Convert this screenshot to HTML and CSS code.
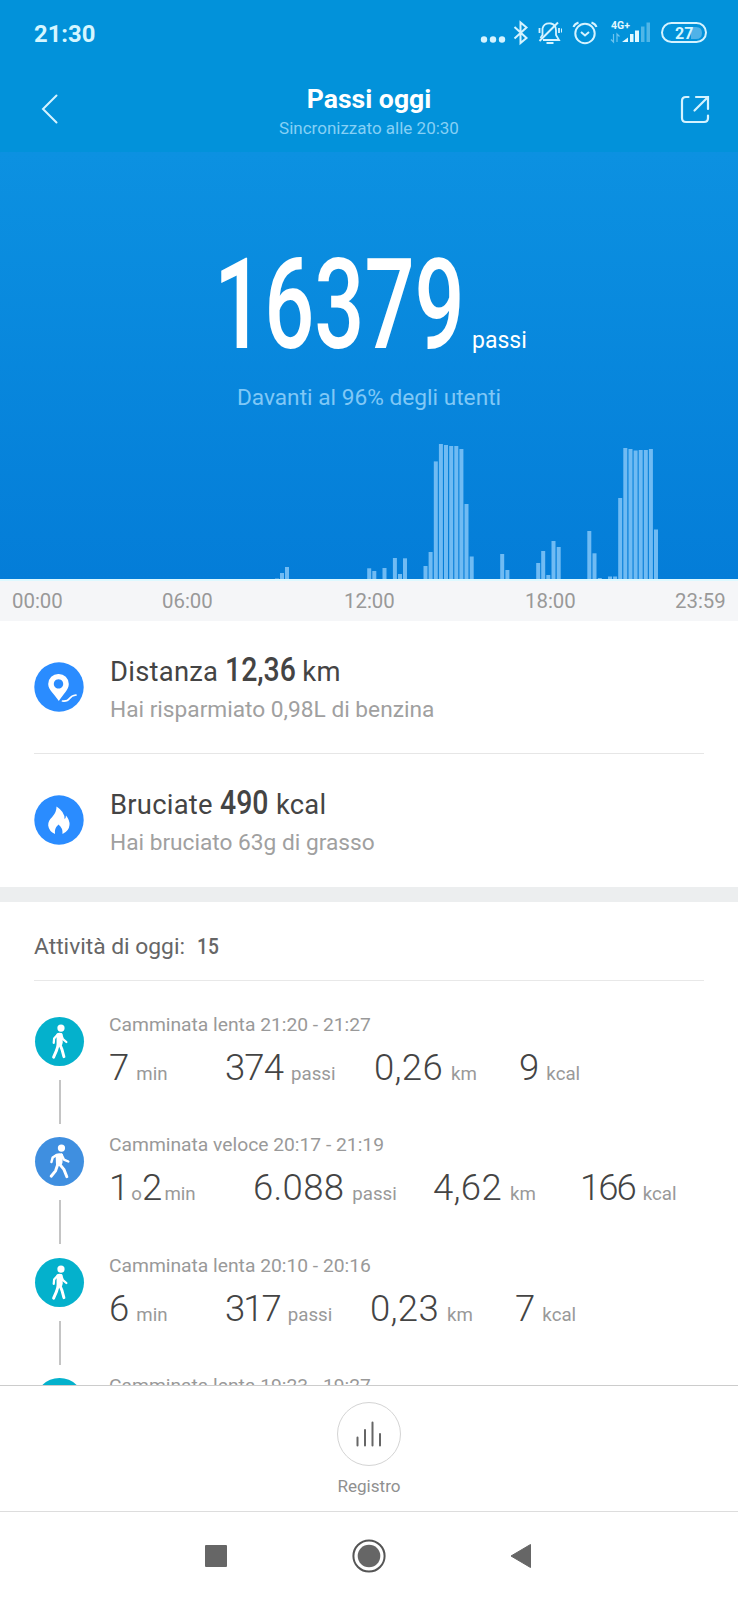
FILE: index.html
```html
<!DOCTYPE html>
<html lang="it">
<head>
    <meta charset="UTF-8">
    <meta name="viewport" content="width=device-width, initial-scale=1.0">
    <title>Passi oggi</title>
    <link rel="stylesheet" href="styles.css">
</head>
<body>

<!-- shared icons -->
<svg class="defs" width="0" height="0">
    <symbol id="walk-slow" viewBox="0 0 50 50">
        <circle cx="26.500" cy="11.300" r="3.700" fill="#fff"/>
        <path d="M26.500 17.500l2 5 3.500 3M23 18l-3.500 4-.4 4.500" fill="none" stroke="#fff" stroke-width="2.300" stroke-linecap="round" stroke-linejoin="round"/>
        <path d="M22 17q3-2 6 0l.3 9-.8 3h-5.500z" fill="#fff"/>
        <path d="M25 27l2.500 6 2 7.500M23.500 29l-1.500 5-3 7" fill="none" stroke="#fff" stroke-width="3" stroke-linecap="round" stroke-linejoin="round"/>
    </symbol>
    <symbol id="walk-fast" viewBox="0 0 50 50">
        <circle cx="27" cy="11.300" r="3.700" fill="#fff"/>
        <path d="M27 18l2.500 5 4.500 2M22 18.500l-4 2.500-1.200 4.500" fill="none" stroke="#fff" stroke-width="2.500" stroke-linecap="round" stroke-linejoin="round"/>
        <path d="M21 17.500q4-2 7.500 0l-.5 9-1.500 3h-5z" fill="#fff"/>
        <path d="M24.500 27l5 6 3 7.500M23 28.500l-2 6-4.500 5.500" fill="none" stroke="#fff" stroke-width="3" stroke-linecap="round" stroke-linejoin="round"/>
    </symbol>
</svg>

<div class="phone">

    <div class="top">
        <div class="status">
            <span class="clock">21:30</span>
            <svg class="status-icons" width="236" height="30" viewBox="474 18 236 30" fill="none" stroke="#d5f3ff" stroke-width="2">
                <g fill="#d5f3ff" stroke="none">
                    <circle cx="484" cy="39.500" r="3.200"/>
                    <circle cx="493" cy="39.500" r="3.200"/>
                    <circle cx="502" cy="39.500" r="3.200"/>
                </g>
                <path d="M514.500 27l12 11-6 5V22.500l6 5-12 11"/>
                <path d="M543 40h16l-3-5v-4.500q0-6-5-7-7-1-8.500 5v6.500l-2 3M546.500 43h7" stroke-width="1.800"/>
                <path d="M539.500 41L558 22.500"/>
                <path d="M539.500 28v5M559 28v5" stroke-width="1.800"/>
                <path d="M561.500 28.500v4" stroke-width="1"/>
                <circle cx="585" cy="33.500" r="9.700"/>
                <path d="M581 32l4 3.500 4-3.500M573.500 27q1-3 5-4.500M596.500 27q-1-3-5-4.500"/>
                <g stroke="#6ec3ee" stroke-width="1.200">
                    <path d="M613.500 34v8l-2.500-2.500M617 42v-8l2.500 2.500"/>
                </g>
                <g stroke="none" fill="#e3f8ff">
                    <path d="M622 42l6-4.500V42z"/>
                    <rect x="630" y="34" width="3.500" height="8"/>
                    <rect x="635" y="30.500" width="4" height="11.500"/>
                    <rect x="641" y="26.500" width="3.500" height="15.500" opacity=".35"/>
                    <rect x="646.500" y="22.500" width="3.500" height="19.500" opacity=".35"/>
                    <text x="611" y="29" class="net">4G+</text>
                </g>
                <path d="M691 27h5q6 0 6 6t-6 6h-5z" fill="#4fb2e8" stroke="none"/>
                <rect x="662" y="23" width="44" height="19" rx="9.500"/>
                <text x="675" y="38.700" class="battery">27</text>
            </svg>
        </div>
        <div class="titlebar">
            <svg class="back" width="20" height="32" viewBox="0 0 20 32">
                <path d="M16.500 2.500L3 16l13.500 13.500" fill="none" stroke="#d5f3ff" stroke-width="2" stroke-linecap="round"/>
            </svg>
            <div class="titles">
                <h1>Passi oggi</h1>
                <p>Sincronizzato alle 20:30</p>
            </div>
            <svg class="share" width="30" height="30" viewBox="0 0 30 30" fill="none" stroke="#d5f3ff" stroke-width="2.200" stroke-linecap="round">
                <path d="M8.500 2H6Q2 2 2 6v17q0 4 4 4h18q4 0 4-4v-2.500"/>
                <path d="M16 2h12v12M28 2L14.500 15.500"/>
            </svg>
        </div>
    </div>

    <div class="hero">
        <div class="total">
            <span class="total-num">16379</span>
            <span class="total-unit">passi</span>
        </div>
        <p class="rank">Davanti al 96% degli utenti</p>
        <svg class="chart" width="738" height="140" viewBox="0 0 738 140" fill="#70bbf3">
            <rect x="275" y="139.500" width="4" height=".5"/>
            <rect x="280" y="134" width="4" height="6"/>
            <rect x="285" y="128" width="4" height="12"/>
            <rect x="367.200" y="129.300" width="4" height="10.700"/>
            <rect x="372.300" y="132" width="4" height="8"/>
            <rect x="382.500" y="129" width="4" height="11"/>
            <rect x="392.900" y="119" width="4" height="21"/>
            <rect x="398" y="135" width="4" height="5"/>
            <rect x="403" y="119.300" width="4" height="20.700"/>
            <rect x="423.500" y="127" width="4" height="13"/>
            <rect x="428.600" y="113" width="4" height="27"/>
            <rect x="433.800" y="22.400" width="4" height="117.600"/>
            <rect x="438.900" y="5" width="4" height="135"/>
            <rect x="444" y="6" width="4" height="134"/>
            <rect x="449.200" y="7" width="4" height="133"/>
            <rect x="454.300" y="7" width="4" height="133"/>
            <rect x="459.400" y="10" width="4" height="130"/>
            <rect x="464.500" y="65" width="4" height="75"/>
            <rect x="469.700" y="117.500" width="4" height="22.500"/>
            <rect x="500.200" y="115" width="4" height="25"/>
            <rect x="505.400" y="131" width="4" height="9"/>
            <rect x="536.200" y="124" width="4" height="16"/>
            <rect x="541.200" y="112" width="4" height="28"/>
            <rect x="546.300" y="136" width="4" height="4"/>
            <rect x="551.500" y="102" width="4" height="38"/>
            <rect x="556.700" y="108" width="4" height="32"/>
            <rect x="587.300" y="92" width="4" height="48"/>
            <rect x="592.500" y="114.300" width="4" height="25.700"/>
            <rect x="597.800" y="139" width="4" height="1"/>
            <rect x="608" y="137.500" width="4" height="2.500"/>
            <rect x="613.100" y="137.500" width="4" height="2.500"/>
            <rect x="618.200" y="59" width="4" height="81"/>
            <rect x="623.300" y="9" width="4" height="131"/>
            <rect x="628.500" y="10" width="4" height="130"/>
            <rect x="633.600" y="11.500" width="4" height="128.500"/>
            <rect x="638.700" y="11" width="4" height="129"/>
            <rect x="643.800" y="11" width="4" height="129"/>
            <rect x="648.900" y="10" width="4" height="130"/>
            <rect x="654" y="90.500" width="4" height="49.500"/>
        </svg>
    </div>

    <div class="axis">
        <span>00:00</span><span>06:00</span><span>12:00</span><span>18:00</span><span>23:59</span>
    </div>

    <div class="summary">
        <div class="card">
            <svg width="50" height="50" viewBox="0 0 50 50">
                <circle cx="25" cy="25" r="24.700" fill="#2a8cff"/>
                <path fill-rule="evenodd" d="M24.500 12a10 10 0 0 1 10.300 10c0 6-6 10.500-10 17-4-6.500-10.600-11-10.600-17A10 10 0 0 1 24.500 12zm0 5.200a4.700 4.700 0 1 0 .01 0z" fill="#fff"/>
                <path d="M28.500 39q5 .5 7-2.500t6.500-3.500" fill="none" stroke="#fff" stroke-width="1.700" stroke-linecap="round"/>
            </svg>
            <div class="card-text">
                <p class="card-title">Distanza <b class="dist"><i>12,36</i></b> km</p>
                <p class="card-sub">Hai risparmiato 0,98L di benzina</p>
            </div>
        </div>
        <div class="card">
            <svg width="50" height="50" viewBox="0 0 50 50">
                <circle cx="25" cy="25" r="24.700" fill="#2a8cff"/>
                <path d="M22.500 11.500q8.500 5.500 8 12.500 1.500-1 1.500-3.500 4 5 3.500 9.500-.5 6-7 9 .5-6-4-9.500-4.500 4-3.500 9.500-6-2.500-6.800-8.500-.4-4.500 4-8.500 4.500-5 4.300-10.500z" fill="#fff"/>
            </svg>
            <div class="card-text">
                <p class="card-title">Bruciate <b class="kcal"><i>490</i></b> kcal</p>
                <p class="card-sub">Hai bruciato 63g di grasso</p>
            </div>
        </div>
    </div>

    <div class="activities">
        <h2>Attività di oggi: <b>15</b></h2>

        <div class="activity">
            <div class="track">
                <svg class="dot slow"><use href="#walk-slow"/></svg>
            </div>
            <div class="info">
                <p class="when">Camminata lenta 21:20 - 21:27</p>
                <div class="metrics m1">
                    <span><em>7</em>min</span>
                    <span><em>374</em>passi</span>
                    <span><em class="dec">0,26</em>km</span>
                    <span><em>9</em>kcal</span>
                </div>
            </div>
        </div>

        <div class="activity">
            <div class="track">
                <svg class="dot fast"><use href="#walk-fast"/></svg>
            </div>
            <div class="info">
                <p class="when">Camminata veloce 20:17 - 21:19</p>
                <div class="metrics m2">
                    <span class="hours"><em>1</em>o<em>2</em>min</span>
                    <span><em class="dec">6.088</em>passi</span>
                    <span><em class="dec">4,62</em>km</span>
                    <span><em class="tight">166</em>kcal</span>
                </div>
            </div>
        </div>

        <div class="activity">
            <div class="track">
                <svg class="dot slow"><use href="#walk-slow"/></svg>
            </div>
            <div class="info">
                <p class="when">Camminata lenta 20:10 - 20:16</p>
                <div class="metrics m3">
                    <span><em>6</em>min</span>
                    <span><em class="tight">317</em>passi</span>
                    <span><em class="dec">0,23</em>km</span>
                    <span><em>7</em>kcal</span>
                </div>
            </div>
        </div>

        <div class="activity">
            <div class="track">
                <svg class="dot slow"><use href="#walk-slow"/></svg>
            </div>
            <div class="info">
                <p class="when">Camminata lenta 19:23 - 19:27</p>
            </div>
        </div>
    </div>

    <div class="bottom">
        <div class="log-btn">
            <svg width="28" height="28" viewBox="0 0 28 28" stroke="#666" stroke-width="2" stroke-linecap="round">
                <path d="M2.500 17.500v8M10 10v15.500M17.500 2.500v23M25 14v11.500"/>
            </svg>
        </div>
        <span>Registro</span>
    </div>

    <div class="navbar">
        <svg width="22" height="22"><rect width="22" height="22" rx="1" fill="#666"/></svg>
        <svg width="34" height="34" viewBox="0 0 34 34">
            <circle cx="17" cy="17" r="15.600" fill="none" stroke="#555" stroke-width="2"/>
            <circle cx="17" cy="17" r="11.300" fill="#666"/>
        </svg>
        <svg width="22" height="26" viewBox="0 0 22 26"><path d="M1 13L20.500 1.500v23z" fill="#666" stroke="#666" stroke-linejoin="round"/></svg>
    </div>

</div>
</body>
</html>
```

FILE: styles.css
```css
* {
    box-sizing: border-box;
}

body {
    margin: 0;
    font-family: Roboto, "Liberation Sans", sans-serif;
    background-color: #fff;
    color: #444;
}

h1, h2, p {
    margin: 0;
    font-weight: normal;
}

svg {
    display: block;
    flex: none;
}

.defs {
    position: absolute;
}

.phone {
    width: 738px;
    height: 1600px;
    display: flex;
    flex-direction: column;
    overflow: hidden;
}

/* header */
.top {
    flex: none;
    height: 152px;
    background-color: #0292da;
}

.status {
    height: 66px;
    padding: 18px 28px 0 34px;
    display: flex;
    justify-content: space-between;
    align-items: flex-start;
}

.clock {
    font-size: 23.8px;
    line-height: 32px;
    font-weight: 700;
    color: #d5f6ff;
}

.net {
    font-size: 10.5px;
    font-weight: 700;
}

.battery {
    font-size: 16px;
    font-weight: 700;
    fill: #d5f6ff;
    stroke: none;
}

.titlebar {
    padding: 16px 28px 0 40px;
    display: flex;
    justify-content: space-between;
}

.back {
    margin-top: 11px;
}

.share {
    margin-top: 13px;
}

.titles {
    text-align: center;
    margin-left: -2px;
}

.titles h1 {
    font-size: 26.6px;
    line-height: 34px;
    font-weight: 700;
    color: #fff;
}

.titles p {
    font-size: 17px;
    line-height: 24px;
    color: #86d0f5;
}

/* step total and chart */
.hero {
    flex: none;
    height: 427px;
    padding-top: 93px;
    display: flex;
    flex-direction: column;
    background: linear-gradient(#0c91e1, #047dd8);
}

.total {
    height: 120px;
    padding-left: 214px;
    display: flex;
    align-items: baseline;
    color: #fff;
}

.total-num {
    width: 258px;
    font-size: 126px;
    line-height: 120px;
    font-weight: 500;
    transform: scaleX(.7);
    transform-origin: left;
}

.total-unit {
    font-size: 23px;
}

.rank {
    margin-top: 17px;
    font-size: 22.7px;
    line-height: 32px;
    text-align: center;
    color: #80c8f6;
}

.chart {
    margin-top: auto;
}

.axis {
    flex: none;
    height: 42px;
    padding-left: 12px;
    display: grid;
    grid-template-columns: 150px 182px 181px 150px auto;
    border-top: 2px solid #ddf9ff;
    background-color: #f5f6f8;
    font-size: 20.4px;
    line-height: 40px;
    color: #999;
}

/* distance and calories */
.summary {
    flex: none;
    height: 266px;
    padding: 0 34px;
}

.card {
    height: 132px;
    display: flex;
    gap: 26px;
    padding-top: 41px;
}

.card + .card {
    height: 134px;
    border-top: 1px solid #e6e6e6;
}

.card-text {
    margin-top: -10px;
}

.card-title {
    height: 40px;
    font-size: 27.4px;
    line-height: 40px;
    letter-spacing: .25px;
    white-space: nowrap;
}

.card-title b {
    display: inline-block;
    line-height: 36px;
    font-size: 33px;
    font-weight: 500;
    letter-spacing: 0;
}

.card-title i {
    display: inline-block;
    font-style: normal;
    transform: scaleX(.86);
    transform-origin: left;
}

.dist {
    width: 70px;
}

.kcal {
    width: 49px;
}

.card-sub {
    font-size: 22.7px;
    line-height: 36px;
    color: #a0a0a0;
}

/* activity list */
.activities {
    flex: 1;
    min-height: 0;
    overflow: hidden;
    border-top: 15px solid #eceeef;
    padding: 0 34px;
}

.activities h2 {
    height: 79px;
    border-bottom: 1px solid #e8e8e8;
    margin-bottom: 36px;
    padding-top: 28px;
    font-size: 22.8px;
    line-height: 34px;
    color: #666;
}

.activities h2 b {
    display: inline-block;
    margin-left: 6px;
    font-weight: 500;
    transform: scaleX(.84);
    transform-origin: left;
}

.activity {
    height: 120.4px;
    display: flex;
}

.track {
    width: 75px;
    padding-left: 1px;
}

/* connector between two activities */
.track::after {
    content: "";
    display: block;
    width: 1.5px;
    height: 44px;
    margin: 14px 0 0 24px;
    background-color: #c4c4c4;
}

.dot {
    width: 49px;
    height: 49px;
    border-radius: 50%;
}

.slow {
    background-color: #04b1cc;
}

.fast {
    background-color: #3f8fe0;
}

.when {
    margin-top: -6px;
    font-size: 19.25px;
    line-height: 28px;
    color: #999;
}

.metrics {
    display: grid;
    margin-top: 4px;
    white-space: nowrap;
    font-size: 18.7px;
    line-height: 50px;
    color: #999;
}

.metrics em {
    margin-right: 8px;
    font-style: normal;
    font-size: 36.5px;
    font-weight: 300;
    letter-spacing: -.9px;
    color: #444;
}

.metrics .dec {
    letter-spacing: .3px;
}

.metrics .tight {
    letter-spacing: -2px;
}

.hours em {
    margin-right: 3px;
}

.m1 {
    grid-template-columns: 116px 149px 145px auto;
}

.m2 {
    grid-template-columns: 144px 180px 147px auto;
}

.m2 .hours em {
    margin-right: 3px;
}

.m3 {
    grid-template-columns: 116px 145px 145px auto;
}

/* bottom button */
.bottom {
    flex: none;
    height: 126px;
    padding-top: 16px;
    display: flex;
    flex-direction: column;
    align-items: center;
    border-top: 1px solid #ccc;
    background-color: #fff;
    font-size: 17.1px;
    line-height: 24px;
    color: #909090;
}

.log-btn {
    width: 64px;
    height: 64px;
    margin-bottom: 8px;
    display: flex;
    align-items: center;
    justify-content: center;
    border: 1px solid #d4d4d4;
    border-radius: 50%;
}

.navbar {
    flex: none;
    height: 89px;
    padding: 0 206px 0 205px;
    display: flex;
    justify-content: space-between;
    align-items: center;
    border-top: 1px solid #ddd;
}
```
